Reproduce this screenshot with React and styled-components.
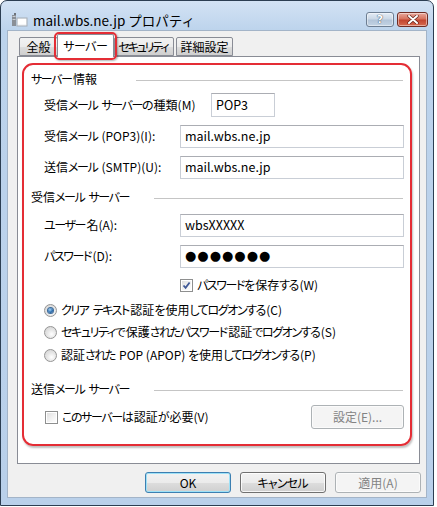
import React from 'react';
import styled, { createGlobalStyle } from 'styled-components';

const GlobalStyle = createGlobalStyle`
	body {
		margin: 0;
		background: #fff;
		font-family: "Noto Sans CJK JP", "Noto Sans", sans-serif;
		font-size: 12px;
		font-feature-settings: "palt" 1;
		color: #000;
	}
`;

const Window = styled.div`
	width: 434px;
	height: 506px;
	box-sizing: border-box;
	border: 1px solid #2c3e52;
	border-radius: 7px 7px 0 0;
	background: linear-gradient(180deg, #d3e2f4 0px, #bcd3ec 30px, #b9d0ea 100%);
	display: flex;
	flex-direction: column;
`;

const TitleBar = styled.div`
	height: 29px;
	box-sizing: border-box;
	padding: 9px 5px 0 10px;
	display: flex;
	align-items: center;
	gap: 5px;
`;

const Title = styled.span`
	flex: 1;
	font-size: 13.5px;
	font-feature-settings: normal;
	color: #000;
	line-height: 18px;
	white-space: nowrap;
`;

const CaptionButtons = styled.div`
	display: flex;
	gap: 3px;
	align-self: flex-start;
	margin-top: 2px;
`;

const CaptionButton = styled.div`
	width: ${(p) => (p.$close ? 31 : 28)}px;
	height: 15px;
	box-sizing: border-box;
	border: 1px solid ${(p) => (p.$close ? '#6e2c24' : '#6d7e92')};
	border-radius: 3px;
	background: ${(p) =>
		p.$close
			? 'linear-gradient(180deg, #e9a99d 0%, #d7735f 45%, #c24530 55%, #d66a4f 100%)'
			: 'linear-gradient(180deg, #e4ecf5 0%, #cbd8e7 45%, #b3c5d9 55%, #c3d3e4 100%)'};
	display: flex;
	align-items: center;
	justify-content: center;
	box-shadow: inset 0 0 0 1px rgba(255, 255, 255, 0.45);
`;

const HelpMark = styled.span`
	font-family: "DejaVu Sans", sans-serif;
	font-weight: bold;
	font-size: 11px;
	line-height: 11px;
	color: #fff;
	text-shadow: 0 0 1px #3c4b5c, 0 0 1px #3c4b5c;
`;

const Client = styled.div`
	flex: 1;
	margin: 0 6px 7px;
	border: 1px solid #a3b4c8;
	background: #f0f0f0;
	display: flex;
	flex-direction: column;
`;

const TabList = styled.div`
	height: 22px;
	margin-top: 3px;
	padding-left: 11px;
	display: flex;
	align-items: flex-end;
	position: relative;
	z-index: 1;
`;

const Tab = styled.div`
	width: ${(p) => p.$w}px;
	height: ${(p) => (p.$active ? 23 : 19)}px;
	box-sizing: border-box;
	margin: 0 0 ${(p) => (p.$active ? -1 : 0)}px ${(p) => p.$gap || 0}px;
	border: 1px solid #898c95;
	border-bottom: ${(p) => (p.$active ? 'none' : '1px solid #898c95')};
	border-radius: 2px 2px 0 0;
	background: ${(p) => (p.$active ? '#fff' : 'linear-gradient(180deg, #f2f2f2 0%, #ebebeb 50%, #dddddd 51%, #cfcfcf 100%)')};
	display: flex;
	align-items: center;
	justify-content: center;
	line-height: 16px;
	white-space: nowrap;
	position: relative;
	z-index: ${(p) => (p.$active ? 2 : 0)};

	${(p) =>
		p.$active &&
		`
		&::after {
			content: '';
			position: absolute;
			left: -4px;
			right: -4px;
			top: -3px;
			bottom: -3px;
			border: 2px solid #e42d35;
			border-radius: 5px;
			box-shadow: 1px 1px 2px rgba(0, 0, 0, 0.3);
		}
	`}
`;

const Panel = styled.div`
	width: 403px;
	height: 408px;
	box-sizing: border-box;
	margin-left: 9px;
	border: 1px solid #898c95;
	background: #fff;
	padding: 6px 0 0 4px;
`;

const Highlight = styled.div`
	width: 390px;
	height: 383px;
	box-sizing: border-box;
	border: 2px solid #e42d35;
	border-radius: 11px;
	box-shadow: 1px 2px 2px rgba(0, 0, 0, 0.25);
	padding: 1px 6px 0 7px;
	display: flex;
	flex-direction: column;
`;

const Heading = styled.div`
	height: 16px;
	margin-top: ${(p) => p.$top}px;
	display: flex;
	align-items: center;
	line-height: 16px;
`;

const HeadingText = styled.span`
	width: ${(p) => p.$width}px;
	flex: none;
	white-space: nowrap;
`;

const Rule = styled.div`
	flex: 1;
	height: 1px;
	margin-right: 1px;
	margin-top: 2px;
	background: #c5c5c5;
`;

const Row = styled.div`
	height: 24px;
	margin-top: ${(p) => p.$top}px;
	margin-left: 13px;
	display: grid;
	grid-template-columns: ${(p) => p.$label}px ${(p) => (p.$field ? `${p.$field}px` : '1fr')};
	align-items: center;
`;

const Label = styled.span`
	line-height: 16px;
	white-space: nowrap;
`;

const TextBox = styled.div`
	height: ${(p) => p.$h || 23}px;
	box-sizing: border-box;
	border: 1px solid #c9ced6;
	border-top-color: #abadb3;
	background: #fff;
	padding: 0 4px;
	display: flex;
	align-items: center;
	font-size: 12.5px;
	line-height: 16px;
`;

const Dots = styled.span`
	font-family: "DejaVu Sans", sans-serif;
	font-size: 13px;
	letter-spacing: 1px;
`;

const Kana = styled.span`
	letter-spacing: ${(p) => p.$ls}px;
	margin-right: ${(p) => -p.$ls}px;
`;

const CheckRow = styled.label`
	height: ${(p) => p.$h || 16}px;
	margin-top: ${(p) => p.$top}px;
	margin-left: ${(p) => p.$indent}px;
	display: flex;
	align-items: center;
	gap: 4px;
	line-height: 16px;
	white-space: nowrap;
`;

const CheckBox = styled.span`
	width: 13px;
	height: 13px;
	box-sizing: border-box;
	border: 1px solid #8e8f8f;
	background: linear-gradient(135deg, #dcdcdc 0%, #f4f4f4 60%, #ffffff 100%);
	box-shadow: inset 0 0 0 1px #fff;
	display: flex;
	align-items: center;
	justify-content: center;
	flex: none;
`;

const Radio = styled.span`
	width: 13px;
	height: 13px;
	box-sizing: border-box;
	border-radius: 50%;
	border: 1px solid #959595;
	background: radial-gradient(circle at 60% 65%, #ffffff 0%, #e6e6e6 45%, #cfcfcf 100%);
	display: flex;
	align-items: center;
	justify-content: center;
	flex: none;

	&::after {
		content: '';
		display: ${(p) => (p.$checked ? 'block' : 'none')};
		width: 5px;
		height: 5px;
		border-radius: 50%;
		background: radial-gradient(circle at 40% 35%, #a7d5f5 0%, #2f70b1 55%, #16427a 100%);
		box-shadow: 0 0 0 1px #3c6a99;
	}
`;

const FieldRow = styled.div`
	height: 24px;
	margin-top: ${(p) => p.$top}px;
	margin-left: 14px;
	display: flex;
	align-items: center;
	justify-content: space-between;
`;

const Button = styled.div`
	width: ${(p) => p.$w || 86}px;
	height: ${(p) => p.$h || 21}px;
	box-sizing: border-box;
	border: 1px solid ${(p) => (p.$disabled ? '#adb2b5' : p.$default ? '#3c7fb1' : '#707070')};
	border-radius: 3px;
	background: ${(p) =>
		p.$disabled
			? '#f4f4f4'
			: 'linear-gradient(180deg, #f2f2f2 0%, #ebebeb 50%, #dddddd 51%, #cfcfcf 100%)'};
	box-shadow: inset 0 0 0 1px ${(p) => (p.$disabled ? '#fbfbfb' : p.$default ? '#9ee1f7' : 'rgba(255,255,255,0.8)')};
	color: ${(p) => (p.$disabled ? '#838383' : '#000')};
	display: flex;
	align-items: center;
	justify-content: center;
	line-height: 16px;
	flex: none;
`;

const Footer = styled.div`
	display: flex;
	justify-content: flex-end;
	gap: 9px;
	padding: 8px 5px 0 0;
`;

// Meiryo UI draws kana narrower than Noto, so kana runs get tightened
function Jp({ text, ls = -1.4 }) {
	return text.split(/([\u3040-\u30ff]+)/).map((part, i) =>
		/[\u3040-\u30ff]/.test(part) ? (
			<Kana key={i} $ls={ls}>
				{part}
			</Kana>
		) : (
			part
		)
	);
}

function AppIcon() {
	return (
		<svg width="17" height="14" viewBox="0 0 17 14">
			<rect x="1" y="2" width="4" height="11" fill="#8a8f96" />
			<rect x="1.5" y="3" width="3" height="1" fill="#c9cdd2" />
			<rect x="1.5" y="6" width="3" height="1" fill="#c9cdd2" />
			<rect x="6" y="5" width="10" height="8" fill="#f4f6f8" stroke="#a6adb5" strokeWidth="1" />
			<rect x="7" y="6" width="8" height="5" fill="#ffffff" />
			<rect x="3" y="0" width="2" height="2" fill="#6d737a" />
		</svg>
	);
}

function CloseMark() {
	return (
		<svg width="12" height="9" viewBox="0 0 12 9">
			<path d="M2 1 L10 8 M10 1 L2 8" stroke="#5a1a12" strokeWidth="3.2" strokeLinecap="round" />
			<path d="M2 1 L10 8 M10 1 L2 8" stroke="#fff" strokeWidth="2" strokeLinecap="round" />
		</svg>
	);
}

function CheckMark() {
	return (
		<svg width="9" height="9" viewBox="0 0 9 9">
			<path d="M1.5 4.5 L3.6 6.8 L7.6 1.5" fill="none" stroke="#3f5896" strokeWidth="1.8" />
		</svg>
	);
}

export default function App() {
	return (
		<>
			<GlobalStyle />
			<Window>
				<TitleBar>
					<AppIcon />
					<Title>mail.wbs.ne.jp プロパティ</Title>
					<CaptionButtons>
						<CaptionButton>
							<HelpMark>?</HelpMark>
						</CaptionButton>
						<CaptionButton $close>
							<CloseMark />
						</CaptionButton>
					</CaptionButtons>
				</TitleBar>

				<Client>
					<TabList>
						<Tab $w={39}>全般</Tab>
						<Tab $w={57} $gap={-1} $active>
							<Jp text="サーバー" ls={-0.5} />
						</Tab>
						<Tab $w={60}>
							<Jp text="セキュリティ" ls={-2.2} />
						</Tab>
						<Tab $w={57} $gap={2}>
							詳細設定
						</Tab>
					</TabList>

					<Panel>
						<Highlight>
							<Heading $top={5}>
								<HeadingText $width={105}>
									<Jp text="サーバー情報" />
								</HeadingText>
								<Rule />
							</Heading>
							<Row $top={6} $label={167} $field={64}>
								<Label>
									<Jp text="受信メール サーバーの種類(M)" />
								</Label>
								<TextBox $h={24}>POP3</TextBox>
							</Row>
							<Row $top={7} $label={136}>
								<Label>
									<Jp text="受信メール (POP3)(I):" />
								</Label>
								<TextBox>mail.wbs.ne.jp</TextBox>
							</Row>
							<Row $top={7} $label={136}>
								<Label>
									<Jp text="送信メール (SMTP)(U):" />
								</Label>
								<TextBox>mail.wbs.ne.jp</TextBox>
							</Row>

							<Heading $top={10}>
								<HeadingText $width={123}>
									<Jp text="受信メール サーバー" />
								</HeadingText>
								<Rule />
							</Heading>
							<Row $top={8} $label={136}>
								<Label>
									<Jp text="ユーザー名(A):" />
								</Label>
								<TextBox>wbsXXXXX</TextBox>
							</Row>
							<Row $top={7} $label={136}>
								<Label>
									<Jp text="パスワード(D):" />
								</Label>
								<TextBox>
									<Dots>●●●●●●●</Dots>
								</TextBox>
							</Row>
							<CheckRow $top={9} $indent={149}>
								<CheckBox>
									<CheckMark />
								</CheckBox>
								<span>
									<Jp text="パスワードを保存する(W)" />
								</span>
							</CheckRow>

							<CheckRow $top={6} $indent={13} $h={22}>
								<Radio $checked />
								<span>
									<Jp text="クリア テキスト認証を使用してログオンする(C)" />
								</span>
							</CheckRow>
							<CheckRow $top={0} $indent={13} $h={22}>
								<Radio />
								<span>
									<Jp text="セキュリティで保護されたパスワード認証でログオンする(S)" />
								</span>
							</CheckRow>
							<CheckRow $top={1} $indent={13} $h={22}>
								<Radio />
								<span>
									<Jp text="認証された POP (APOP) を使用してログオンする(P)" />
								</span>
							</CheckRow>

							<Heading $top={15}>
								<HeadingText $width={123}>
									<Jp text="送信メール サーバー" />
								</HeadingText>
								<Rule />
							</Heading>
							<FieldRow $top={8}>
								<CheckRow $top={0} $indent={0}>
									<CheckBox />
									<span>
										<Jp text="このサーバーは認証が必要(V)" />
									</span>
								</CheckRow>
								<Button $disabled $w={93} $h={24}>
									設定(E)...
								</Button>
							</FieldRow>
						</Highlight>
					</Panel>

					<Footer>
						<Button $default>OK</Button>
						<Button>
							<Jp text="キャンセル" ls={-0.8} />
						</Button>
						<Button $disabled>適用(A)</Button>
					</Footer>
				</Client>
			</Window>
		</>
	);
}
